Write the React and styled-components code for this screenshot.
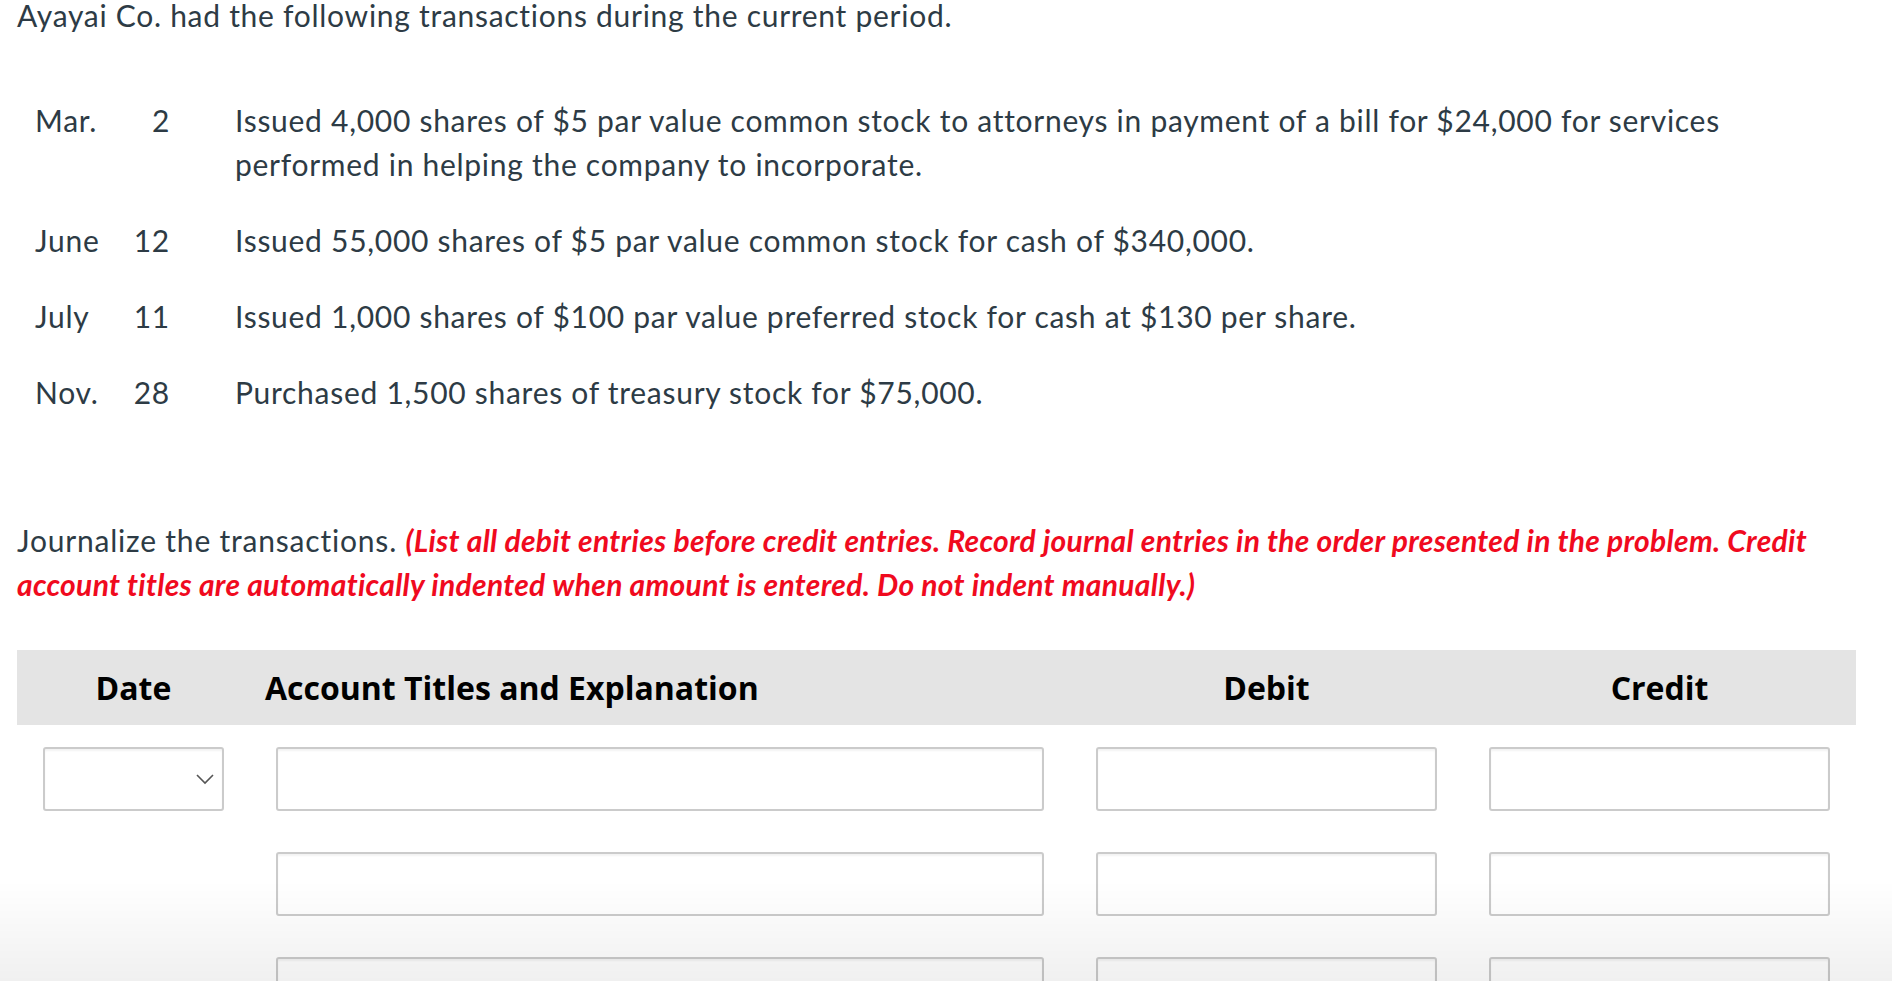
import React from "react";
import styled, { createGlobalStyle } from "styled-components";

const GlobalStyle = createGlobalStyle`
  html, body {
    margin: 0;
    padding: 0;
    background: #ffffff;
  }
  body {
    font-family: Lato, "Open Sans", sans-serif;
    color: #2d3b45;
  }
`;

const Page = styled.div`
  padding: 0 36px 120px 17px;
`;

const Title = styled.p`
  margin: 0;
  font-size: 30px;
  line-height: 30px;
  letter-spacing: 0.72px;
`;

const TxList = styled.div`
  display: flex;
  flex-direction: column;
  gap: 32.5px;
  margin-top: 69px;
  padding-left: 18px;
  font-size: 30px;
  line-height: 43.5px;
  letter-spacing: 0.72px;
`;

const TxRow = styled.div`
  display: grid;
  grid-template-columns: 80px 55px 1fr;
`;

const Month = styled.span``;

const Day = styled.span`
  text-align: right;
`;

const Desc = styled.span`
  padding-left: 65px;
  max-width: 1560px;
`;

const Instructions = styled.p`
  margin: 104px 0 0;
  font-size: 30px;
  line-height: 44px;
  letter-spacing: 0.8px;
`;

const Note = styled.em`
  color: #f00a1e;
  font-weight: 700;
  font-style: italic;
  letter-spacing: 0.3px;
`;

const Journal = styled.div`
  margin-top: 44px;
  display: grid;
  grid-template-columns: 233px 820px 393px 393px;
`;

const HeadCell = styled.div`
  background: #e4e4e4;
  height: 75px;
  display: flex;
  align-items: center;
  justify-content: ${(p) => (p.$left ? "flex-start" : "center")};
  padding-left: ${(p) => (p.$left ? "15px" : "0")};
  font-family: "Open Sans", sans-serif;
  font-weight: 700;
  font-size: 32px;
  color: #000;
`;

const Cell = styled.div`
  padding: ${(p) => (p.$first ? "22px" : "41px")} 26px 0 26px;
  box-sizing: border-box;
  height: ${(p) => (p.$first ? "86px" : "105px")};
`;

const Field = styled.div`
  box-sizing: border-box;
  height: 64px;
  border: 2px solid #cbcbcb;
  border-radius: 3px;
  box-shadow: inset 0 2px 2px rgba(0, 0, 0, 0.05);
  background: #fff;
`;

const SelectBox = styled(Field)`
  display: flex;
  align-items: center;
  justify-content: flex-end;
  padding-right: 7px;
`;

const BottomFade = styled.div`
  position: fixed;
  left: 0;
  right: 0;
  bottom: 0;
  height: 100px;
  pointer-events: none;
  background: linear-gradient(rgba(0, 0, 0, 0), rgba(0, 0, 0, 0.06));
`;

const transactions = [
  {
    month: "Mar.",
    day: "2",
    text: "Issued 4,000 shares of $5 par value common stock to attorneys in payment of a bill for $24,000 for services performed in helping the company to incorporate.",
  },
  {
    month: "June",
    day: "12",
    text: "Issued 55,000 shares of $5 par value common stock for cash of $340,000.",
  },
  {
    month: "July",
    day: "11",
    text: "Issued 1,000 shares of $100 par value preferred stock for cash at $130 per share.",
  },
  {
    month: "Nov.",
    day: "28",
    text: "Purchased 1,500 shares of treasury stock for $75,000.",
  },
];

const Chevron = () => (
  <svg width="20" height="12" viewBox="0 0 20 12">
    <path d="M2 2 L10 10 L18 2" fill="none" stroke="#555" strokeWidth="1.6" />
  </svg>
);

function App() {
  const rows = [0, 1, 2];
  return (
    <Page>
      <GlobalStyle />
      <Title>Ayayai Co. had the following transactions during the current period.</Title>

      <TxList>
        {transactions.map((t) => (
          <TxRow key={t.month}>
            <Month>{t.month}</Month>
            <Day>{t.day}</Day>
            <Desc>{t.text}</Desc>
          </TxRow>
        ))}
      </TxList>

      <Instructions>
        Journalize the transactions.{" "}
        <Note>
          (List all debit entries before credit entries. Record journal entries in the order
          presented in the problem. Credit account titles are automatically indented when amount
          is entered. Do not indent manually.)
        </Note>
      </Instructions>

      <Journal>
        <HeadCell>Date</HeadCell>
        <HeadCell $left>Account Titles and Explanation</HeadCell>
        <HeadCell>Debit</HeadCell>
        <HeadCell>Credit</HeadCell>
        {rows.map((r) => (
          <React.Fragment key={r}>
            <Cell $first={r === 0}>
              {r === 0 && (
                <SelectBox>
                  <Chevron />
                </SelectBox>
              )}
            </Cell>
            <Cell $first={r === 0}>
              <Field />
            </Cell>
            <Cell $first={r === 0}>
              <Field />
            </Cell>
            <Cell $first={r === 0}>
              <Field />
            </Cell>
          </React.Fragment>
        ))}
      </Journal>
      <BottomFade />
    </Page>
  );
}

export default App;
